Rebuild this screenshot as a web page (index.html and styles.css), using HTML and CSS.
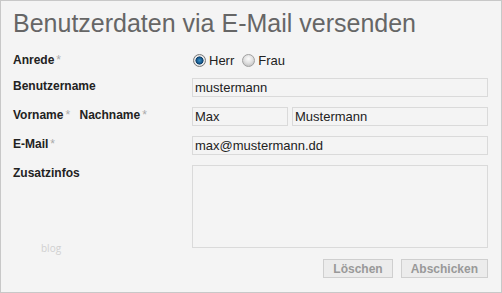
FILE: index.html
```html
<!DOCTYPE html>
<html lang="de">
<head>
    <meta charset="UTF-8">
    <title>Benutzerdaten via E-Mail versenden</title>
    <link rel="stylesheet" href="styles.css">
</head>
<body>
    <div class="panel">
        <h1 class="panel_title">Benutzerdaten via E-Mail versenden</h1>

        <form class="user_form">
            <div class="form_label">Anrede<span class="req">*</span></div>
            <div class="radio_group">
                <label class="radio_item"><input type="radio" name="anrede" checked> Herr</label>
                <label class="radio_item"><input type="radio" name="anrede"> Frau</label>
            </div>

            <div class="form_label">Benutzername</div>
            <input class="field" type="text" value="mustermann">

            <div class="form_label">Vorname<span class="req">*</span> <span class="second">Nachname</span><span class="req">*</span></div>
            <div class="name_pair">
                <input class="field" type="text" value="Max">
                <input class="field" type="text" value="Mustermann">
            </div>

            <div class="form_label">E-Mail<span class="req">*</span></div>
            <input class="field" type="text" value="max@mustermann.dd">

            <div class="form_label">Zusatzinfos</div>
            <textarea class="field field_area"></textarea>

            <div></div>
            <div class="form_actions">
                <button type="reset" class="btn" disabled>Löschen</button>
                <button type="submit" class="btn" disabled>Abschicken</button>
            </div>
        </form>

        <span class="watermark">blog</span>
    </div>
</body>
</html>
```

FILE: styles.css
```css
body {
    margin: 0;
    font-family: "Liberation Sans", Arial, sans-serif;
    background: #f4f4f4;
}

.panel {
    position: relative;
    box-sizing: border-box;
    width: 502px;
    height: 293px;
    border: 1px solid #c8c8c8;
    background: #f4f4f4;
    padding: 7px 13px 0 12px;
}

.panel_title {
    margin: 0;
    font-size: 25px;
    line-height: 30px;
    font-weight: normal;
    color: #666;
}

/* two column form: labels left, fields right */
.user_form {
    display: grid;
    grid-template-columns: 179px 1fr;
    grid-template-rows: 16px 19px 19px 19px 83px 19px;
    row-gap: 10px;
    margin-top: 14px;
}

.user_form > :nth-last-child(1),
.user_form > :nth-last-child(2) {
    margin-top: 1px;
}

.form_label {
    font-size: 12px;
    font-weight: bold;
    line-height: 17px;
    color: #222;
    white-space: nowrap;
}

.form_label .second {
    margin-left: 6px;
}

.req {
    font-weight: normal;
    color: #aaa;
    margin-left: 2px;
}

.radio_group {
    display: flex;
    align-items: center;
    gap: 7px;
    height: 16px;
}

.radio_item {
    display: inline-flex;
    align-items: center;
    gap: 3px;
    font-size: 13px;
    color: #222;
}

.radio_item input {
    appearance: none;
    -webkit-appearance: none;
    margin: 0 0 0 1px;
    width: 13px;
    height: 13px;
    border-radius: 50%;
    border: 1px solid #a0a0a0;
    background: radial-gradient(circle at 50% 35%, #fbfbfb 0, #e2e2e2 4px, #c8c8c8 7px);
    box-sizing: border-box;
}

.radio_item input:checked {
    border-color: #7a7a7a;
    background: radial-gradient(circle at 50% 50%, #3d8fc4 0, #1a5f93 2.5px, #0c3a63 3.8px, #f2f2f2 4.3px, #d4d4d4 6px);
}

.field {
    box-sizing: border-box;
    width: 100%;
    height: 19px;
    margin: 0;
    padding: 0 2px;
    border: 1px solid #dadada;
    background: #f4f4f4;
    font-family: "Liberation Sans", Arial, sans-serif;
    font-size: 13px;
    color: #222;
}

.field_area {
    height: 83px;
    resize: none;
}

.name_pair {
    display: grid;
    grid-template-columns: 96px 1fr;
    gap: 4px;
}

.form_actions {
    display: flex;
    justify-content: flex-end;
    gap: 8px;
    margin-top: 1px;
}

.btn {
    height: 19px;
    padding: 0 9px;
    border: 1px solid #cfcfcf;
    background: #ececec;
    font-family: "Liberation Sans", Arial, sans-serif;
    font-size: 12px;
    font-weight: bold;
    color: #999;
}

/* faint watermark left of the textarea */
.watermark {
    position: absolute;
    left: 40px;
    top: 240px;
    font-family: "Open Sans", sans-serif;
    font-size: 10px;
    color: #d0d0d0;
}
```
